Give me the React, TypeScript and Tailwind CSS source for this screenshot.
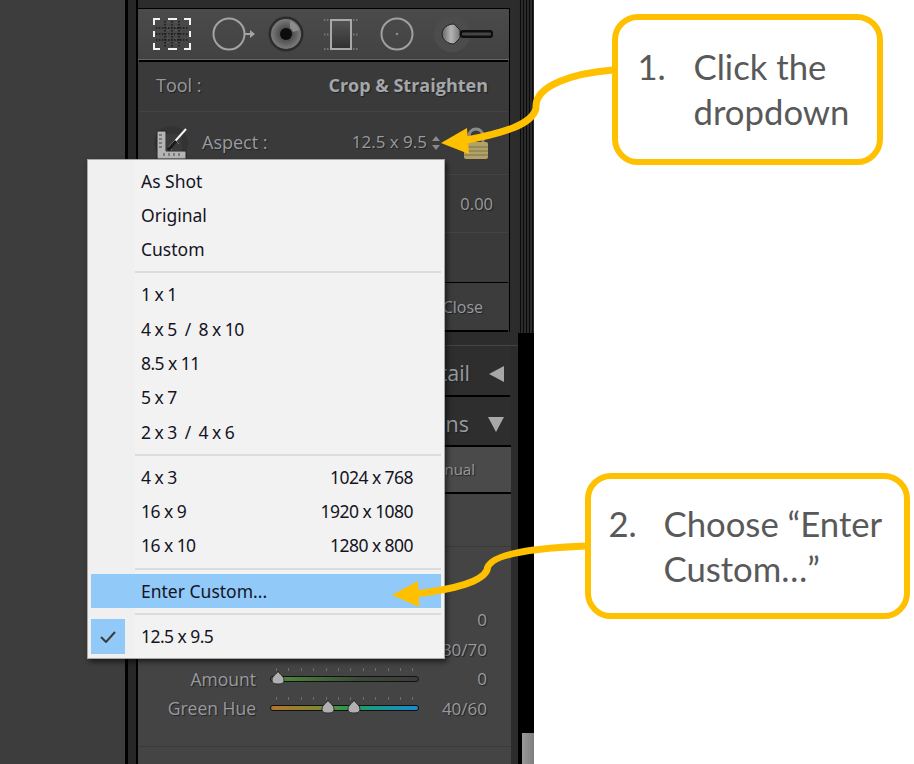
import React from "react";

const lr = "[font-family:'Open_Sans','Noto_Sans',sans-serif] text-[#979ba0] [text-shadow:1px_1px_1px_#222]";

function CropIcon() {
  return (
    <svg width="40" height="34" viewBox="0 0 40 34" fill="none">
      <g stroke="#161616" strokeWidth="1.4" strokeDasharray="1.4 1.6">
        <path d="M13 4v26M20 4v26M27 4v26M4 11h32M4 17h32M4 23h32" />
      </g>
      <g stroke="#6a6a6a" strokeWidth="1" strokeDasharray="1 3">
        <path d="M16 5v24M24 5v24" />
      </g>
      <g stroke="#f2f2f2" strokeWidth="2">
        <path d="M2 8V2h6M32 2h6v6M2 26v6h6M38 26v6h-6M16 2h9M16 32h9M2 14v6M38 14v6" />
      </g>
    </svg>
  );
}

function CircleArrow() {
  return (
    <svg width="44" height="36" viewBox="0 0 44 36" fill="none">
      <circle cx="17" cy="18" r="15.5" stroke="#a4a4a4" strokeWidth="2" />
      <path d="M33 18h6" stroke="#a4a4a4" strokeWidth="2" />
      <path d="M38 14l5 4-5 4z" fill="#a4a4a4" />
    </svg>
  );
}

function Eye() {
  return (
    <svg width="36" height="36" viewBox="0 0 36 36">
      <defs>
        <radialGradient id="iris">
          <stop offset="0.35" stopColor="#4a4a4a" />
          <stop offset="1" stopColor="#7c7c7c" />
        </radialGradient>
      </defs>
      <circle cx="18" cy="18" r="17.5" fill="#2c2c2c" />
      <circle cx="18" cy="18" r="15" fill="url(#iris)" />
      <path d="M22 5a13 13 0 0 1 9 9l-6 2a7 7 0 0 0-3-4z" fill="#8c8c8c" />
      <circle cx="18" cy="18" r="6" fill="#0c0c0c" />
    </svg>
  );
}

function RectIcon() {
  return (
    <svg width="34" height="34" viewBox="0 0 34 34" fill="none">
      <defs>
        <linearGradient id="rectFill" x1="0" y1="0" x2="0" y2="1">
          <stop offset="0" stopColor="#555" />
          <stop offset="1" stopColor="#303030" />
        </linearGradient>
      </defs>
      <rect x="7" y="3" width="20" height="29" fill="url(#rectFill)" stroke="#a8a8a8" strokeWidth="2" />
      <g stroke="#777" strokeWidth="2" strokeDasharray="1.5 1.5">
        <path d="M0 3h5M29 3h5M0 17.5h5M29 17.5h5M0 32h5M29 32h5" />
      </g>
    </svg>
  );
}

function CircleDot() {
  return (
    <svg width="34" height="34" viewBox="0 0 34 34" fill="none">
      <circle cx="17" cy="17" r="15.5" stroke="#a0a0a0" strokeWidth="2" />
      <circle cx="17" cy="17" r="1.3" fill="#888" />
    </svg>
  );
}

function Brush() {
  return (
    <svg width="62" height="38" viewBox="0 0 62 38">
      <defs>
        <linearGradient id="bristle" x1="0" y1="0" x2="1" y2="0">
          <stop offset="0" stopColor="#666" />
          <stop offset="0.5" stopColor="#b4b4b4" />
          <stop offset="1" stopColor="#777" />
        </linearGradient>
      </defs>
      <circle cx="19" cy="19" r="18" fill="#4c4c4c" />
      <path d="M9 19c0-6 6-10 12-10l6 6v8l-6 6c-6 0-12-4-12-10z" fill="url(#bristle)" stroke="#222" strokeWidth="1" />
      <rect x="27" y="15" width="33" height="8" rx="3" fill="#0e0e0e" />
      <rect x="29" y="17.5" width="29" height="3" rx="1" fill="#444" />
    </svg>
  );
}

function AspectIcon() {
  return (
    <svg width="36" height="36" viewBox="0 0 36 36" fill="none">
      <circle cx="17" cy="18" r="17" fill="#333" />
      <path d="M3 6h9v20h20v8H3z" fill="#b5b5b5" stroke="#222" strokeWidth="1" />
      <path d="M12 9h16v17H12z" fill="#3a3a3a" />
      <path d="M5 10h3M5 14h3M5 18h3M5 22h3M10 31v-3M15 31v-3M20 31v-3M25 31v-3" stroke="#444" strokeWidth="1" />
      <path d="M15 22l3 3M22 16l3 3" stroke="#777" strokeWidth="1" />
      <path d="M15 23L32 4" stroke="#f4f4f4" strokeWidth="2" />
      <path d="M14 25l8-9" stroke="#1a1a1a" strokeWidth="3" />
    </svg>
  );
}

function Lock() {
  return (
    <svg width="26" height="33" viewBox="0 0 26 33" fill="none">
      <path d="M6 16V9a7 7 0 0 1 14 0v7" stroke="#8a8a8a" strokeWidth="3" />
      <rect x="1" y="15" width="24" height="17" rx="2" fill="#b0a268" />
      <path d="M1 20h24M1 24h24M1 28h24" stroke="#7d7246" strokeWidth="1" />
    </svg>
  );
}

function Slider({ track, thumbs }: { track: string; thumbs: number[] }) {
  return (
    <div className="relative h-[6px] w-[149px]">
      <div className="absolute left-[6px] right-[6px] top-[-8px] h-[3px] bg-[repeating-linear-gradient(90deg,#6e6e6e_0px,#6e6e6e_1px,transparent_1px,transparent_12.4px)]" />
      <div className={`h-full rounded-full border border-[#111] ${track}`} />
      {thumbs.map((t) => (
        <svg key={t} width="16" height="16" viewBox="0 0 16 16" className="absolute top-[-6px]" style={{ left: t }}>
          <path d="M8 1c1 3 6 5 6 9 0 3-2 4-6 4s-6-1-6-4c0-4 5-6 6-9z" fill="#b0b0b0" stroke="#2a2a2a" strokeWidth="1" />
        </svg>
      ))}
    </div>
  );
}

function SliderRow({ label, value, track, thumbs }: { label?: string; value: string; track: string; thumbs: number[] }) {
  return (
    <div className={`flex h-[29.5px] items-center ${lr}`}>
      <div className="w-[118px] shrink-0 text-right text-[17.5px]">{label}</div>
      <div className="ml-[14px]">
        <Slider track={track} thumbs={thumbs} />
      </div>
      <div className="w-[68px] shrink-0 text-right text-[17px]">{value}</div>
    </div>
  );
}

function MenuItem({ left, right, active, tight }: { left: string; right?: string; active?: boolean; tight?: boolean }) {
  return (
    <div
      className={`flex h-[34.3px] shrink-0 items-center justify-between whitespace-pre pl-[50px] pr-[28px] ${active ? "bg-[#91c9f8]" : ""} ${tight ? "tracking-[-0.55px]" : ""}`}
    >
      <span>{left}</span>
      {right && <span>{right}</span>}
    </div>
  );
}

function Sep() {
  return <div className="mb-[4px] ml-[44px] mt-[5px] h-[2px] shrink-0 bg-[#dcdcdc]" />;
}

export default function App() {
  return (
    <div className="relative h-[764px] w-[914px] overflow-hidden bg-white">
      <div className="flex h-full w-[534px]">
        <div className="w-[125px] bg-[#3d3d3d]" />
        <div className="w-[3px] bg-black" />
        <div className="w-[8px] bg-[#272727]" />
        <div className="w-[2px] bg-black" />

        <div className="flex w-[380px] flex-col bg-[#2c2c2c]">
          <div className="h-[8px]" />
          {/* Tool panel */}
          <div className="mr-[8px] flex h-[324px] shrink-0 flex-col border-r border-t border-black bg-[#3a3a3a]">
            <div className="flex h-[51px] shrink-0 items-center border-b border-[#666] bg-gradient-to-b from-[#4b4b4b] to-[#424242] pl-[14px]">
              <CropIcon />
              <div className="ml-[20px]"><CircleArrow /></div>
              <div className="ml-[12px]"><Eye /></div>
              <div className="ml-[20px]"><RectIcon /></div>
              <div className="ml-[22px]"><CircleDot /></div>
              <div className="ml-[19px]"><Brush /></div>
            </div>
            <div className={`mx-[1px] flex flex-1 flex-col border-t-2 border-black ${lr}`}>
              <div className="flex h-[50px] shrink-0 items-center justify-between border-b border-[#444] pb-[2px] pl-[17px] pr-[20px] text-[18px]">
                <span>Tool :</span>
                <span className="font-bold text-[#a3a7ac]">Crop &amp; Straighten</span>
              </div>
              <div className="flex h-[63px] shrink-0 items-center border-b border-[#444] pl-[15px]">
                <AspectIcon />
                <span className="ml-[12px] pb-[2px] text-[18px]">Aspect :</span>
                <span className="ml-auto pb-[2px] text-[17px]">12.5 x 9.5</span>
                <svg width="8" height="14" viewBox="0 0 8 14" className="ml-[5px]">
                  <path d="M4 0l4 5H0zM4 14l4-5H0z" fill="#8a8a8a" />
                </svg>
                <div className="ml-[23px] mr-[19px]"><Lock /></div>
              </div>
              <div className="flex h-[58px] shrink-0 items-center justify-end border-b border-[#444] pr-[15px] pt-[2px] text-[16.5px]">0.00</div>
              <div className="h-[50px] shrink-0 border-b border-black" />
              <div className="flex flex-1 items-center justify-end border-b-2 border-black bg-[#3c3c3c] pr-[25px] text-[16px]">Close</div>
            </div>
          </div>
          <div className="h-[14px] shrink-0 border-b border-[#444] bg-[#2c2c2c]" />

          {/* Collapsed sections */}
          <div className={`mr-[8px] flex h-[51px] shrink-0 items-center justify-end border-b-2 border-black bg-[#2e2e2e] pr-[6px] pt-[6px] text-[21.5px] ${lr}`}>
            <span>Detail</span>
            <svg width="15" height="16" viewBox="0 0 15 16" className="ml-[19px]"><path d="M0 8L15 0v16z" fill="#a8a8a8" /></svg>
          </div>
          <div className={`mr-[8px] flex h-[48px] shrink-0 items-center justify-end bg-[#2e2e2e] pr-[6px] pt-[6px] text-[21.5px] ${lr}`}>
            <span>Lens Corrections</span>
            <svg width="16" height="15" viewBox="0 0 16 15" className="ml-[19px]"><path d="M8 15L0 0h16z" fill="#a8a8a8" /></svg>
          </div>

          <div className="mr-[7px] flex flex-1 flex-col bg-[#444444]">
            <div className={`flex h-[49px] shrink-0 items-center justify-end border-b-2 border-t-2 border-black bg-[#4a4a4a] pr-[36px] text-[15px] ${lr}`}>
              Manual
            </div>
            <div className="h-[53px] shrink-0 border-b border-[#3a3a3a]" />
            <div className="h-[58px] shrink-0" />
            <SliderRow value="0" track="bg-[#555]" thumbs={[8]} />
            <SliderRow value="30/70" track="bg-[#555]" thumbs={[40, 90]} />
            <SliderRow label="Amount" value="0" track="bg-[linear-gradient(90deg,#4f8f3a,#3c4a38_60%,#3c3c3c)]" thumbs={[0]} />
            <SliderRow label="Green Hue" value="40/60" track="bg-[linear-gradient(90deg,#b5762c,#7a8a30_35%,#2a9a4a_50%,#1a9a8a_70%,#1a8ad0)]" thumbs={[50, 76]} />
            <div className="mt-[23px] flex-1 border-t border-[#3a3a3a]" />
          </div>
        </div>

        {/* Right strip */}
        <div className="flex w-[16px] flex-col bg-black">
          <div className="h-[333px] shrink-0 bg-[repeating-linear-gradient(90deg,#2b2b2b_0px,#2b2b2b_2px,#0a0a0a_2px,#0a0a0a_3px)]" />
          <div className="ml-[4px] mt-auto h-[31px] bg-gradient-to-r from-[#999] to-[#7d7d7d]" />
        </div>
      </div>

      {/* Dropdown menu */}
      <div className="absolute left-[87px] top-[159px] flex h-[500px] w-[358px] flex-col border border-[#a8a8a8] bg-[linear-gradient(90deg,#f0f0f0_47px,#f2f2f2_47px)] px-[3px] pt-[3.5px] text-[17.5px] text-[#14141f] shadow-[2px_3px_5px_rgba(0,0,0,0.55)] [font-family:'Noto_Sans',sans-serif]">
        <MenuItem left="As Shot" />
        <MenuItem left="Original" />
        <MenuItem left="Custom" />
        <Sep />
        <MenuItem left="1 x 1" tight />
        <MenuItem left="4 x 5  /  8 x 10" tight />
        <MenuItem left="8.5 x 11" tight />
        <MenuItem left="5 x 7" tight />
        <MenuItem left="2 x 3  /  4 x 6" tight />
        <Sep />
        <MenuItem left="4 x 3" right="1024 x 768" tight />
        <MenuItem left="16 x 9" right="1920 x 1080" tight />
        <MenuItem left="16 x 10" right="1280 x 800" tight />
        <Sep />
        <MenuItem left="Enter Custom..." active />
        <Sep />
        <div className="relative">
          <MenuItem left="12.5 x 9.5" tight />
          <div className="absolute left-0 top-0 flex h-[35px] w-[34px] items-center justify-center bg-[#91c9f8]">
            <svg width="16" height="12" viewBox="0 0 16 12" fill="none"><path d="M1 6l5 5 9-10" stroke="#3c3c3c" strokeWidth="2" /></svg>
          </div>
        </div>
      </div>

      {/* Callouts */}
      <div className="absolute left-[612px] top-[14px] flex h-[151px] w-[271px] rounded-[26px] border-[6px] border-[#ffc000] bg-white pl-[19.5px] pt-[24px] text-[34.7px] leading-[45px] text-[#595959] [font-family:'Lato',sans-serif]">
        <div className="w-[56px] shrink-0">1.</div>
        <div>Click the dropdown</div>
      </div>
      <div className="absolute left-[585px] top-[473px] flex h-[146px] w-[325px] rounded-[26px] border-[6px] border-[#ffc000] bg-white pl-[17.5px] pt-[22px] text-[34.7px] leading-[45px] text-[#595959] [font-family:'Lato',sans-serif]">
        <div className="w-[55px] shrink-0">2.</div>
        <div>Choose “Enter Custom…”</div>
      </div>

      {/* Arrows */}
      <svg width="914" height="764" viewBox="0 0 914 764" fill="none" className="pointer-events-none absolute left-0 top-0">
        <path d="M613 70C575 73 534 85 536 108C533 124 505 133 462 141" stroke="#ffc000" strokeWidth="7" />
        <path d="M441 143L467 128L469 154z" fill="#ffc000" />
        <path d="M585 546C540 548 488 553 487 570C482 582 455 589 414 594" stroke="#ffc000" strokeWidth="7" />
        <path d="M392 595L418 581L419 607z" fill="#ffc000" />
      </svg>
    </div>
  );
}
